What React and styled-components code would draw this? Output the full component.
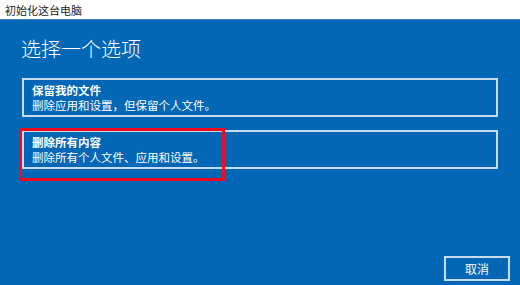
import React from "react";
import styled, { createGlobalStyle } from "styled-components";

const Global = createGlobalStyle`
  html, body { margin: 0; padding: 0; }
  body { width: 520px; height: 285px; overflow: hidden; font-family: "Noto Sans CJK SC", "Noto Sans", sans-serif; }
`;

const Window = styled.div`
  width: 520px;
  height: 285px;
  display: flex;
  flex-direction: column;
  background: #0367b6;
`;

const TitleBar = styled.div`
  height: 20px;
  flex: none;
  background: #ffffff;
  border-bottom: 1px solid #3d86c6;
  box-sizing: border-box;
  display: flex;
  align-items: center;
  padding-left: 5px;
  font-size: 11px;
  color: #222;
`;

const Body = styled.div`
  flex: 1;
  display: flex;
  flex-direction: column;
  padding: 15px 22px 4px 22px;
`;

const Heading = styled.h1`
  margin: 0 0 0 -1px;
  font-size: 20px;
  font-weight: 300;
  line-height: 28px;
  color: #ffffff;
  height: 43px;
`;

const Options = styled.div`
  display: flex;
  flex-direction: column;
  gap: 13px;
`;

const Option = styled.div`
  position: relative;
  height: 39px;
  box-sizing: border-box;
  border: 2px solid #c7dcef;
  padding: 0 8px;
  color: #ffffff;
  display: flex;
  flex-direction: column;
  justify-content: center;
`;

const OptionTitle = styled.div`
  font-size: 11.5px;
  font-weight: 700;
  line-height: 15px;
`;

const OptionDesc = styled.div`
  font-size: 11.5px;
  line-height: 15px;
`;

const Highlight = styled.div`
  position: absolute;
  left: -5px;
  top: -4px;
  width: 206px;
  height: 53px;
  border: 3px solid #f5091f;
  box-sizing: border-box;
  pointer-events: none;
`;

const Footer = styled.div`
  margin-top: auto;
  display: flex;
  justify-content: flex-end;
  margin-right: -12px;
`;

const CancelButton = styled.button`
  width: 66px;
  height: 25px;
  box-sizing: border-box;
  border: 2px solid #c7dcef;
  background: transparent;
  color: #ffffff;
  font-family: inherit;
  font-size: 12px;
  padding: 0;
`;

export default function App() {
  return (
    <>
      <Global />
      <Window>
        <TitleBar>初始化这台电脑</TitleBar>
        <Body>
          <Heading>选择一个选项</Heading>
          <Options>
            <Option>
              <OptionTitle>保留我的文件</OptionTitle>
              <OptionDesc>删除应用和设置，但保留个人文件。</OptionDesc>
            </Option>
            <Option>
              <OptionTitle>删除所有内容</OptionTitle>
              <OptionDesc>删除所有个人文件、应用和设置。</OptionDesc>
              <Highlight />
            </Option>
          </Options>
          <Footer>
            <CancelButton>取消</CancelButton>
          </Footer>
        </Body>
      </Window>
    </>
  );
}
